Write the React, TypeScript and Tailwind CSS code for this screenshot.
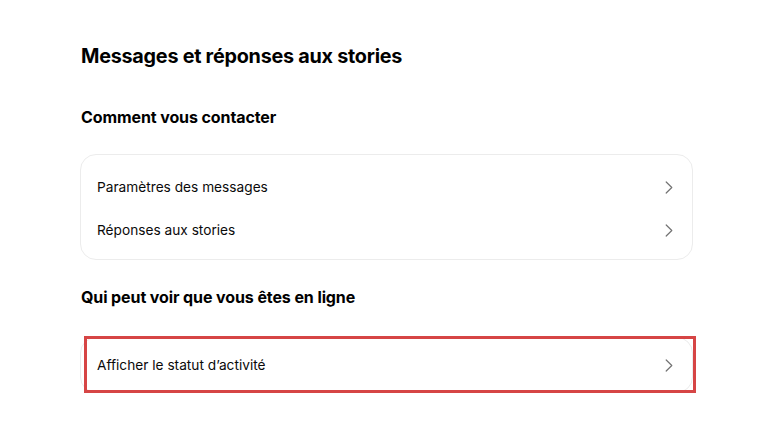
import React from "react";

function Chevron() {
  return (
    <svg width="8" height="13" viewBox="0 0 8 13" fill="none" className="shrink-0">
      <path d="M1.2 1 L6.8 6.5 L1.2 12" stroke="#737373" strokeWidth="1.2" strokeLinecap="round" strokeLinejoin="round" />
    </svg>
  );
}

function Row({ label }: { label: string }) {
  return (
    <div className="flex h-[43px] items-center justify-between pl-4 pr-[19px]">
      <span className="text-[13.7px] text-[#0a0a0a]">{label}</span>
      <Chevron />
    </div>
  );
}

export default function App() {
  return (
    <div
      className="min-h-[432px] w-[768px] bg-white pl-[80px] pr-[75px] text-black"
      style={{ fontFamily: "Inter, 'Liberation Sans', sans-serif" }}
    >
      <h1 className="pl-px pt-[42px] text-[19.8px] font-bold leading-[28px] tracking-[-0.25px]">
        Messages et réponses aux stories
      </h1>
      <h2 className="mt-[36px] pl-px text-[16px] font-bold leading-[22px] tracking-[-0.1px]">Comment vous contacter</h2>
      <div className="mt-[26px] rounded-[16px] border border-[#ececec] pb-[7px] pt-[11px]">
        <Row label="Paramètres des messages" />
        <Row label="Réponses aux stories" />
      </div>
      <h2 className="mt-[26px] pl-px text-[16px] font-bold leading-[22px] tracking-[-0.1px]">Qui peut voir que vous êtes en ligne</h2>
      <div className="relative mt-[29px]">
        <div className="rounded-[16px] border border-[#ececec]">
          <div className="flex h-[54px] items-center justify-between pl-4 pr-[19px]">
            <span className="text-[13.7px] text-[#0a0a0a]">Afficher le statut d’activité</span>
            <Chevron />
          </div>
        </div>
        <div className="pointer-events-none absolute left-[4px] right-[-3px] top-[-1px] bottom-[0px] border-[3px] border-[#d64545]" />
      </div>
    </div>
  );
}
